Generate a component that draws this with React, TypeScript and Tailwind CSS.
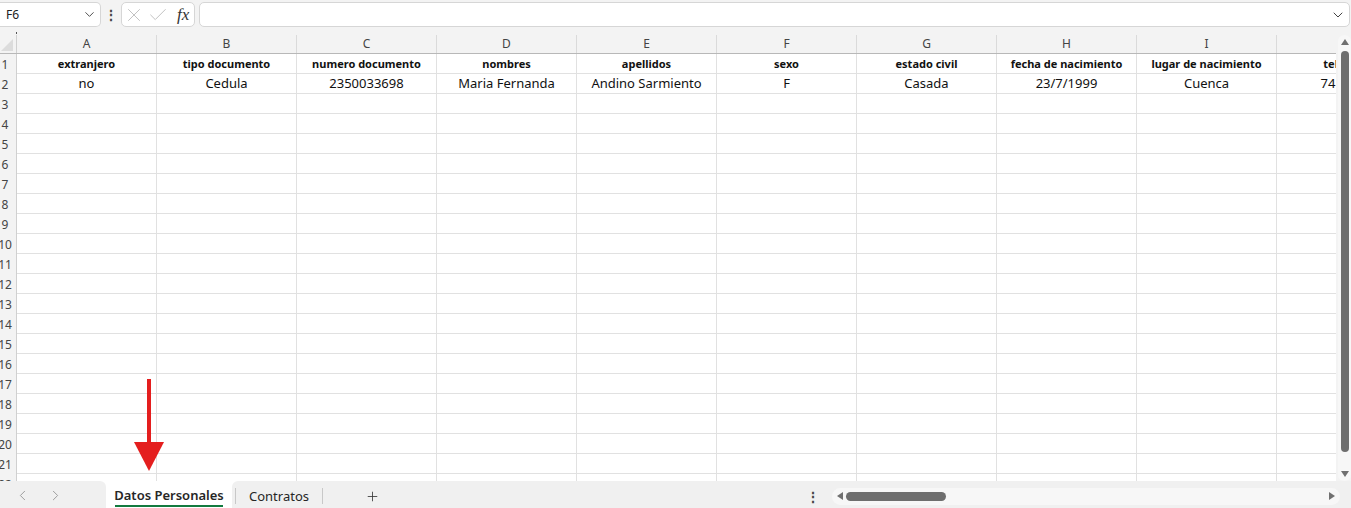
import React from 'react';
import { ChevronDown, X, Check, Plus, ChevronLeft, ChevronRight } from 'lucide-react';

const columns = ['A', 'B', 'C', 'D', 'E', 'F', 'G', 'H', 'I', 'J'];

const headerRow = [
  'extranjero',
  'tipo documento',
  'numero documento',
  'nombres',
  'apellidos',
  'sexo',
  'estado civil',
  'fecha de nacimiento',
  'lugar de nacimiento',
  'telefono',
];

const dataRow = [
  'no',
  'Cedula',
  '2350033698',
  'Maria Fernanda',
  'Andino Sarmiento',
  'F',
  'Casada',
  '23/7/1999',
  'Cuenca',
  '7418956',
];

const rowNumbers = Array.from({ length: 22 }, (_, i) => i + 1);

const FormulaBar: React.FC = () => (
  <div className="relative flex h-[35px] shrink-0 items-start pt-[2px]">
    {/* Name box */}
    <div className="flex h-[25px] w-[101px] items-center justify-between rounded-r-[5px] border border-l-0 border-[#d6d6d6] bg-white pl-[6px] pr-[3px] text-[12px] text-[#222]">
      <span>F6</span>
      <ChevronDown size={15} strokeWidth={1.5} className="text-[#444]" />
    </div>
    <div className="flex h-[25px] w-[20px] items-center justify-center text-[14px] font-bold text-[#444]">⋮</div>
    {/* Cancel / enter / fx */}
    <div className="flex h-[25px] w-[74px] items-center rounded-[5px] border border-[#d6d6d6] bg-white">
      <X size={22} strokeWidth={1} className="ml-[1px] text-[#bcbcbc]" />
      <Check size={22} strokeWidth={1} className="ml-[2px] text-[#bcbcbc]" />
      <span className="ml-[8px] font-['Liberation_Serif',serif] text-[17px] italic leading-none text-[#333]">fx</span>
    </div>
    {/* Formula input */}
    <div className="ml-[4px] flex h-[25px] w-[1151px] items-center justify-end rounded-[5px] border border-[#d6d6d6] bg-white pr-[3px]">
      <ChevronDown size={16} strokeWidth={1.5} className="text-[#444]" />
    </div>
    <div className="absolute left-[16px] top-[32px] h-[2px] w-px bg-[#555]" />
  </div>
);

const RowLabel: React.FC<{ n: number }> = ({ n }) => (
  <div className="flex h-full w-[17px] shrink-0 items-center overflow-hidden border-r border-[#d0d0d0] bg-[#f3f3f3]">
    <div className="-ml-[10px] flex w-[30px] shrink-0 justify-center pt-[1px] text-[12px] text-[#444]">{n}</div>
  </div>
);

const Sheet: React.FC = () => (
  <div className="relative w-[1336px] shrink-0 overflow-hidden bg-white">
    {/* Column headers */}
    <div className="flex h-[19px] border-b border-[#b8b8b8] bg-[#f3f3f3]">
      <div className="relative w-[17px] shrink-0 border-r border-[#d0d0d0]">
        <div className="absolute bottom-[2px] right-[3px] h-0 w-0 border-b-[12px] border-l-[12px] border-b-[#dcdcdc] border-l-transparent" />
      </div>
      {columns.map((c) => (
        <div
          key={c}
          className="flex w-[140px] shrink-0 items-center justify-center border-r border-[#dadada] text-[12px] text-[#444]"
        >
          {c}
        </div>
      ))}
    </div>
    {rowNumbers.map((n) => (
      <div key={n} className="flex h-[20px] shrink-0">
        <RowLabel n={n} />
        {columns.map((c, i) => {
          const value = n === 1 ? headerRow[i] : n === 2 ? dataRow[i] : '';
          return (
            <div
              key={c}
              className={`flex w-[140px] shrink-0 items-center justify-center whitespace-nowrap border-b border-r border-[#e1e1e1] pt-[1px] text-[#111] ${
                n === 1 ? 'text-[11px] font-bold' : 'text-[13px]'
              }`}
            >
              {value}
            </div>
          );
        })}
      </div>
    ))}
  </div>
);

const VerticalScroll: React.FC = () => (
  <div className="ml-[2px] flex w-[13px] flex-col items-center rounded-[6px] bg-[#f7f7f7] pt-[4px] pb-[4px]">
    <div className="h-0 w-0 border-x-[4px] border-b-[6px] border-x-transparent border-b-[#707070]" />
    <div className="mb-[19px] mt-[6px] w-[8px] flex-1 rounded-full bg-[#6e6e6e]" />
    <div className="h-0 w-0 border-x-[4px] border-t-[6px] border-x-transparent border-t-[#707070]" />
  </div>
);

const TabBar: React.FC = () => (
  <div className="flex h-[27px] shrink-0 items-stretch bg-white">
    <div className="flex w-[106px] items-center gap-[16px] rounded-tr-[6px] bg-[#f0f0f0] pl-[14px] pt-[2px] text-[#8f8f8f]">
      <ChevronLeft size={17} strokeWidth={1.2} />
      <ChevronRight size={17} strokeWidth={1.2} />
    </div>
    <div className="flex w-[126px] flex-col items-center justify-center bg-white pt-[3px]">
      <span className="text-[13px] font-semibold leading-[18px] text-[#262626]">Datos Personales</span>
      <div className="mt-[1px] h-[2px] w-[108px] bg-[#137a3f]" />
    </div>
    <div className="flex flex-1 items-center rounded-tl-[6px] bg-[#f0f0f0] pt-[3px]">
      <div className="ml-[3px] h-[16px] w-px bg-[#c8c8c8]" />
      <span className="ml-[13px] pt-[1px] text-[13px] text-[#262626]">Contratos</span>
      <div className="ml-[13px] h-[16px] w-px bg-[#c8c8c8]" />
      <Plus size={15} strokeWidth={1.3} className="ml-[42px] text-[#333]" />
      <div className="ml-[426px] text-[14px] font-bold text-[#444]">⋮</div>
      <div className="ml-[12px] flex h-[17px] w-[508px] items-center rounded-full bg-[#f7f7f7] px-[5px]">
        <div className="h-0 w-0 border-y-[4px] border-r-[6px] border-y-transparent border-r-[#707070]" />
        <div className="ml-[3px] h-[9px] w-[100px] rounded-full bg-[#6e6e6e]" />
        <div className="ml-auto h-0 w-0 border-y-[4px] border-l-[6px] border-y-transparent border-l-[#707070]" />
      </div>
    </div>
  </div>
);

const App: React.FC = () => {
  return (
    <div className="relative flex h-[508px] w-[1351px] flex-col overflow-hidden bg-[#f3f3f3] font-['Noto_Sans',sans-serif]">
      <FormulaBar />
      <div className="flex h-[446px] shrink-0 overflow-hidden">
        <Sheet />
        <VerticalScroll />
      </div>
      <TabBar />

      {/* Red annotation arrow */}
      <div className="pointer-events-none absolute left-[134px] top-[379px] flex flex-col items-center">
        <div className="h-[63px] w-[4px] bg-[#e41e1e]" />
        <div className="h-0 w-0 border-x-[15px] border-t-[29px] border-x-transparent border-t-[#e41e1e]" />
      </div>
    </div>
  );
};

export default App;
